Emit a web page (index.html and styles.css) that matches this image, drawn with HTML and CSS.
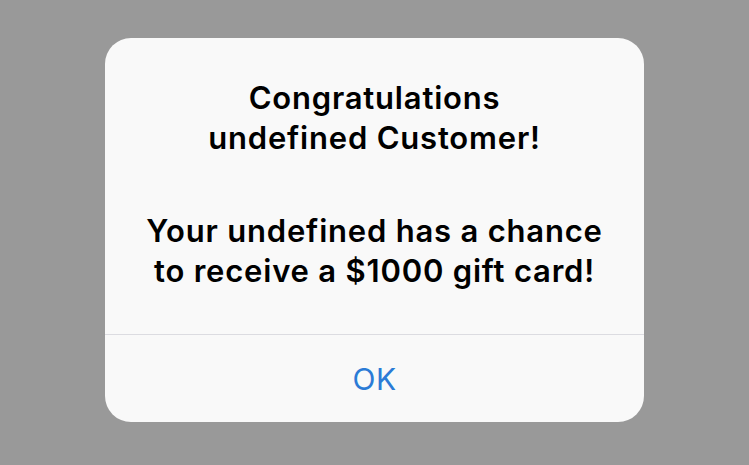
FILE: index.html
```html
<!DOCTYPE html>
<html>
<head>
<meta charset="utf-8">
<link rel="stylesheet" href="styles.css">
</head>
<body>
<div class="overlay">
  <div class="alert">
    <div class="alert-body">
      <p class="alert-text">Congratulations<br>undefined Customer!</p>
      <p class="alert-text">Your undefined has a chance<br>to receive a $1000 gift card!</p>
    </div>
    <div class="alert-actions">
      <button class="alert-button">OK</button>
    </div>
  </div>
</div>
</body>
</html>
```
FILE: styles.css
```css
html, body {
  margin: 0;
  padding: 0;
  height: 100%;
  background: #999999;
}
.overlay {
  display: flex;
  justify-content: center;
  padding-top: 38px;
}
.alert {
  width: 539px;
  height: 384px;
  background: #f9f9f9;
  border-radius: 26px;
  display: flex;
  flex-direction: column;
  overflow: hidden;
  font-family: Inter, "Liberation Sans", sans-serif;
}
.alert-body {
  flex: 1;
  display: flex;
  flex-direction: column;
  align-items: center;
  gap: 53px;
  padding-top: 40px;
  border-bottom: 1px solid #dcdce1;
}
.alert-text {
  margin: 0;
  text-align: center;
  font-size: 31px;
  letter-spacing: 0.8px;
  line-height: 40px;
  font-weight: 600;
  color: #000;
}
.alert-actions {
  height: 87px;
  display: flex;
}
.alert-button {
  flex: 1;
  border: 0;
  background: transparent;
  font-family: inherit;
  font-size: 30px;
  letter-spacing: 0.5px;
  font-weight: 400;
  color: #2b7bd6;
  padding: 0;
}
```
